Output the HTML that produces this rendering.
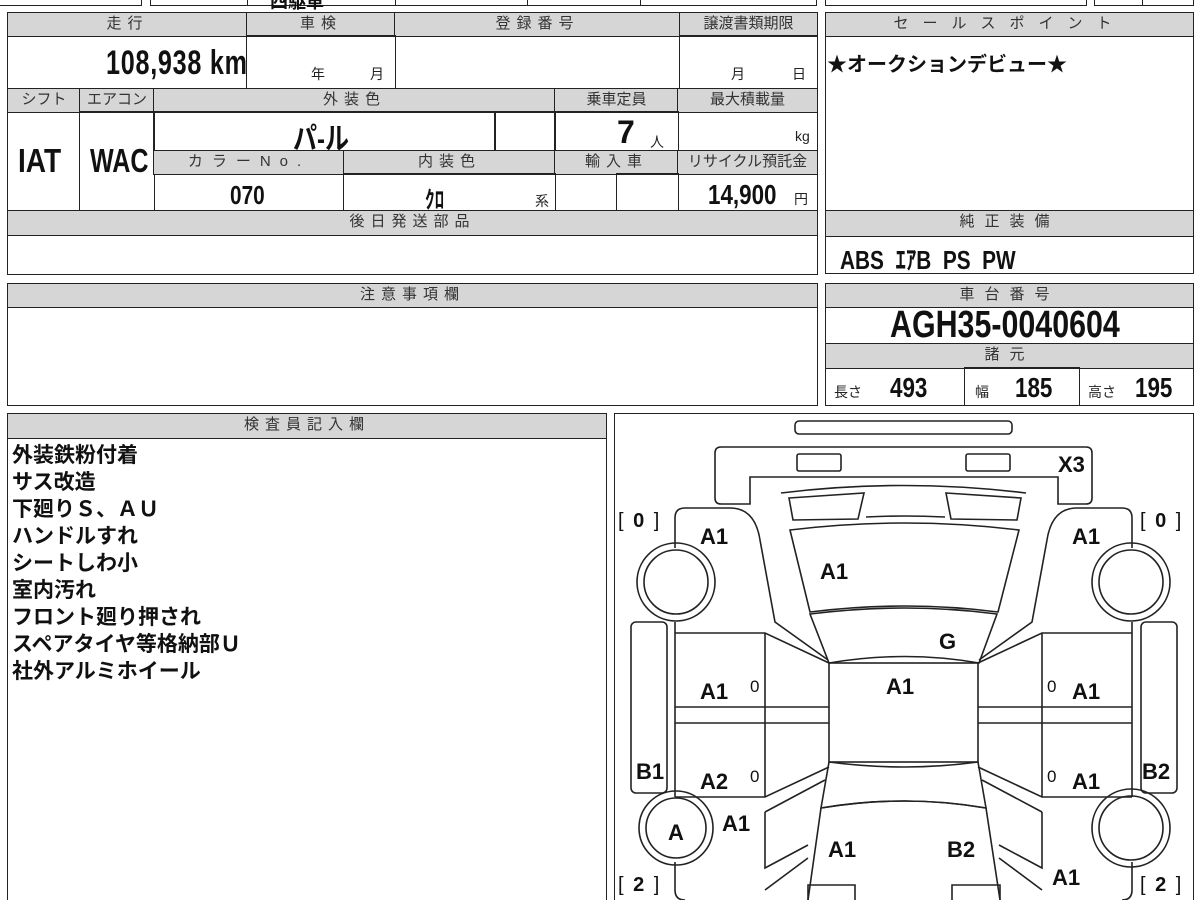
<!DOCTYPE html>
<html><head><meta charset="utf-8"><style>
*{box-sizing:border-box;margin:0;padding:0}
html,body{width:1200px;height:900px;overflow:hidden}
body{background:#fff;position:relative;font-family:"Liberation Sans","Noto Sans CJK JP",sans-serif;color:#111}
.b{position:absolute;border:1.5px solid #222}
.h{position:absolute;background:#d6d6d6;border:1.5px solid #222;color:#333;font-size:15px;text-align:center;line-height:21px;letter-spacing:6px}
.t{position:absolute;white-space:nowrap}
.n{font-family:"Liberation Sans Narrow","Liberation Sans","Noto Sans CJK JP",sans-serif;font-weight:bold;color:#111}
.s{font-size:14px;color:#222}
.lab{font-weight:bold;font-size:22px;font-family:"Liberation Sans","DejaVu Sans",sans-serif}
.br{font-size:20px;letter-spacing:2px}
</style></head><body>
<div class="b" style="left:-2px;top:-10px;width:144px;height:16px"></div>
<div class="b" style="left:150px;top:-10px;width:667px;height:16px"></div>
<div class="b" style="left:247px;top:-10px;width:149px;height:16px"></div>
<div class="b" style="left:527px;top:-10px;width:114px;height:16px"></div>
<div class="b" style="left:825px;top:-10px;width:262px;height:16px"></div>
<div class="b" style="left:1094px;top:-10px;width:100px;height:16px"></div>
<div class="b" style="left:1142px;top:-10px;width:52px;height:16px"></div>
<div class="t n" style="left:270px;top:-12px;font-size:18px">四駆車</div>

<div class="b" style="left:7px;top:12px;width:811px;height:263px"></div>
<div class="h" style="left:7px;top:12px;width:241px;height:25px">走行</div>
<div class="h" style="left:246px;top:12px;width:150px;height:25px">車検</div>
<div class="h" style="left:394px;top:12px;width:287px;height:25px">登録番号</div>
<div class="h" style="left:679px;top:12px;width:139px;height:25px;letter-spacing:0">譲渡書類期限</div>
<div class="b" style="left:246px;top:35px;width:150px;height:55px"></div>
<div class="b" style="left:679px;top:35px;width:139px;height:55px"></div>
<div class="t n" style="left:106px;top:44px;font-size:34px;transform:scaleX(.74);transform-origin:left;letter-spacing:1px">108,938 km</div>
<div class="t s" style="left:311px;top:64px">年</div><div class="t s" style="left:370px;top:64px">月</div>
<div class="t s" style="left:731px;top:64px">月</div><div class="t s" style="left:792px;top:64px">日</div>

<div class="h" style="left:7px;top:88px;width:74px;height:25px;letter-spacing:0">シフト</div>
<div class="h" style="left:79px;top:88px;width:76px;height:25px;letter-spacing:0">エアコン</div>
<div class="h" style="left:153px;top:88px;width:403px;height:25px">外装色</div>
<div class="h" style="left:554px;top:88px;width:125px;height:25px;letter-spacing:0">乗車定員</div>
<div class="h" style="left:677px;top:88px;width:141px;height:25px;letter-spacing:0">最大積載量</div>
<div class="b" style="left:79px;top:111px;width:76px;height:101px"></div>
<div class="b" style="left:153px;top:111px;width:343px;height:41px"></div>
<div class="b" style="left:494px;top:111px;width:62px;height:41px"></div>
<div class="b" style="left:554px;top:111px;width:125px;height:41px"></div>
<div class="h" style="left:153px;top:150px;width:192px;height:25px;letter-spacing:9px">カラーNo.</div>
<div class="h" style="left:343px;top:150px;width:213px;height:25px">内装色</div>
<div class="h" style="left:554px;top:150px;width:125px;height:25px">輸入車</div>
<div class="h" style="left:677px;top:150px;width:141px;height:25px;letter-spacing:0">リサイクル預託金</div>
<div class="b" style="left:343px;top:173px;width:213px;height:39px"></div>
<div class="b" style="left:616px;top:173px;width:63px;height:39px"></div>
<div class="t n" style="left:18px;top:142px;font-size:33px;transform:scaleX(.85);transform-origin:left">IAT</div>
<div class="t n" style="left:90px;top:142px;font-size:33px;transform:scaleX(.76);transform-origin:left">WAC</div>
<div class="t n" style="left:293px;top:114px;font-size:30px;transform:scaleX(.8);transform-origin:left">パ-ル</div>
<div class="t n" style="left:617px;top:114px;font-size:32px">7</div>
<div class="t s" style="left:650px;top:132px">人</div>
<div class="t s" style="left:795px;top:128px">kg</div>
<div class="t n" style="left:230px;top:180px;font-size:26px;transform:scaleX(.8);transform-origin:left">070</div>
<div class="t n" style="left:425px;top:180px;font-size:24px;transform:scaleX(.8);transform-origin:left">ｸﾛ</div>
<div class="t s" style="left:535px;top:191px">系</div>
<div class="t n" style="left:708px;top:179px;font-size:28px;transform:scaleX(.8);transform-origin:left">14,900</div>
<div class="t s" style="left:794px;top:189px">円</div>
<div class="h" style="left:7px;top:210px;width:811px;height:26px">後日発送部品</div>

<div class="b" style="left:825px;top:12px;width:369px;height:262px"></div>
<div class="h" style="left:825px;top:12px;width:369px;height:25px;letter-spacing:14px">セールスポイント</div>
<div class="t" style="left:827px;top:48px;font-size:20px;font-weight:bold;font-family:'Noto Sans CJK JP',sans-serif">★オークションデビュー★</div>
<div class="h" style="left:825px;top:210px;width:369px;height:27px;letter-spacing:10px">純正装備</div>
<div class="t n" style="left:840px;top:240px;font-size:26px;transform:scaleX(.8);transform-origin:left">ABS&nbsp; ｴｱB&nbsp; PS&nbsp; PW</div>

<div class="b" style="left:7px;top:283px;width:811px;height:123px"></div>
<div class="h" style="left:7px;top:283px;width:811px;height:25px">注意事項欄</div>

<div class="b" style="left:825px;top:283px;width:369px;height:123px"></div>
<div class="h" style="left:825px;top:283px;width:369px;height:25px;letter-spacing:10px">車台番号</div>
<div class="t n" style="left:890px;top:304px;font-size:38px;transform:scaleX(.8);transform-origin:left">AGH35-0040604</div>
<div class="h" style="left:825px;top:343px;width:369px;height:26px;letter-spacing:10px">諸元</div>
<div class="b" style="left:964px;top:367px;width:116px;height:39px"></div>
<div class="t s" style="left:834px;top:382px">長さ</div><div class="t n" style="left:890px;top:372px;font-size:28px;transform:scaleX(.8);transform-origin:left">493</div>
<div class="t s" style="left:975px;top:382px">幅</div><div class="t n" style="left:1015px;top:372px;font-size:28px;transform:scaleX(.8);transform-origin:left">185</div>
<div class="t s" style="left:1088px;top:382px">高さ</div><div class="t n" style="left:1135px;top:372px;font-size:28px;transform:scaleX(.8);transform-origin:left">195</div>

<div class="b" style="left:7px;top:413px;width:600px;height:500px"></div>
<div class="h" style="left:7px;top:413px;width:600px;height:26px">検査員記入欄</div>
<div class="t" style="left:12px;top:441px;font-size:21px;font-weight:bold;line-height:27px;font-family:'Noto Sans CJK JP',sans-serif;white-space:pre">外装鉄粉付着
サス改造
下廻りＳ、ＡＵ
ハンドルすれ
シートしわ小
室内汚れ
フロント廻り押され
スペアタイヤ等格納部Ｕ
社外アルミホイール</div>

<div class="b" style="left:614px;top:413px;width:580px;height:500px"></div>
<svg style="position:absolute;left:0;top:0" width="1200" height="900" fill="none" stroke="#222" stroke-width="1.6">
<rect x="795" y="421" width="217" height="13" rx="4"/>
<path d="M750 504 H721 Q715 504 715 498 V453 Q715 447 721 447 H1086 Q1092 447 1092 453 V498 Q1092 504 1086 504 H1058 V477 H750 Z"/>
<rect x="797" y="454" width="44" height="17" rx="2"/>
<rect x="966" y="454" width="44" height="17" rx="2"/>
<path d="M781 493 Q903 478 1026 493"/>
<path d="M789 498 L864 493 L858 519 L793 520 Z"/>
<path d="M946 493 L1021 498 L1017 520 L951 519 Z"/>
<path d="M866 517 Q903 515 945 517"/>
<path d="M790 530 Q905 516 1019 530 L998 612 Q905 600 810 612 Z"/>
<path d="M810 614 Q905 602 997 614 L979 663 Q905 650 829 663 Z"/>
<rect x="829" y="663" width="149" height="99"/>
<path d="M829 762 Q905 772 978 762 L986 808 Q905 794 821 808 Z"/>
<path d="M821 808 Q905 794 986 808 L1000 900 M808 900 L821 808"/>
<path d="M675 548 V518 Q675 508 685 508 H730 Q755 508 760 540 L775 622 L828 660"/>
<path d="M1132 548 V518 Q1132 508 1122 508 H1077 Q1052 508 1047 540 L1032 622 L979 660"/>
<circle cx="676" cy="582" r="39"/><circle cx="676" cy="582" r="32"/>
<circle cx="1131" cy="582" r="39"/><circle cx="1131" cy="582" r="32"/>
<rect x="631" y="622" width="36" height="171" rx="5"/>
<rect x="1141" y="622" width="36" height="171" rx="5"/>
<path d="M675 622 V797 M675 633 H765 L829 663 M675 707 H829 M675 723 H829 M765 633 V797 M675 797 H765 L829 767"/>
<path d="M1132 622 V797 M1132 633 H1042 L978 663 M1132 707 H978 M1132 723 H978 M1042 633 V797 M1132 797 H1042 L978 767"/>
<circle cx="676" cy="828" r="37"/><circle cx="676" cy="828" r="30"/>
<circle cx="1131" cy="828" r="39"/><circle cx="1131" cy="828" r="32"/>
<path d="M765 812 L825 780 M765 812 V868 L808 845 M675 862 V890 Q675 900 685 900 M808 858 L765 890"/>
<path d="M1042 812 L982 780 M1042 812 V868 L999 845 M1132 862 V890 Q1132 900 1122 900 M999 858 L1042 890"/>
<path d="M808 900 V885 H855 V900 M1000 900 V885 H952 V900"/>
</svg>
<div class="t br" style="left:618px;top:510px">[ <b>0</b> ]</div>
<div class="t br" style="left:1140px;top:510px">[ <b>0</b> ]</div>
<div class="t br" style="left:618px;top:874px">[ <b>2</b> ]</div>
<div class="t br" style="left:1140px;top:874px">[ <b>2</b> ]</div>
<div class="t lab" style="left:1058px;top:452px">X3</div>
<div class="t lab" style="left:700px;top:524px">A1</div>
<div class="t lab" style="left:820px;top:559px">A1</div>
<div class="t lab" style="left:1072px;top:524px">A1</div>
<div class="t lab" style="left:939px;top:629px">G</div>
<div class="t lab" style="left:700px;top:679px">A1</div>
<div class="t lab" style="left:886px;top:674px">A1</div>
<div class="t lab" style="left:1072px;top:679px">A1</div>
<div class="t" style="left:750px;top:677px;font-size:17px">0</div>
<div class="t" style="left:1047px;top:677px;font-size:17px">0</div>
<div class="t" style="left:750px;top:767px;font-size:17px">0</div>
<div class="t" style="left:1047px;top:767px;font-size:17px">0</div>
<div class="t lab" style="left:636px;top:759px">B1</div>
<div class="t lab" style="left:700px;top:769px">A2</div>
<div class="t lab" style="left:1072px;top:769px">A1</div>
<div class="t lab" style="left:1142px;top:759px">B2</div>
<div class="t lab" style="left:668px;top:820px">A</div>
<div class="t lab" style="left:722px;top:811px">A1</div>
<div class="t lab" style="left:828px;top:837px">A1</div>
<div class="t lab" style="left:947px;top:837px">B2</div>
<div class="t lab" style="left:1052px;top:865px">A1</div>
</body></html>
